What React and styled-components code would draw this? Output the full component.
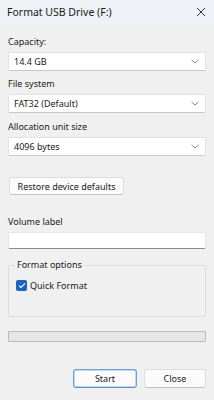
import React from 'react';
import styled, { createGlobalStyle } from 'styled-components';

const Global = createGlobalStyle`
  html, body { margin: 0; padding: 0; background: #f0f0f0; }
  body { font-family: "Noto Sans", "DejaVu Sans", sans-serif; color: #1a1a1a; }
`;

const Window = styled.div`
  width: 214px;
  height: 400px;
  background: #f0f0f0;
  display: flex;
  flex-direction: column;
`;

const TitleBar = styled.div`
  height: 24px;
  background: #eef1f6;
  display: flex;
  align-items: center;
  justify-content: space-between;
  padding: 0 8px 0 7px;
  font-size: 10.5px;
`;

const Body = styled.div`
  display: flex;
  flex-direction: column;
  padding: 0 8px;
`;

const Label = styled.div`
  font-size: 9px;
  margin-top: ${p => p.top || 12}px;
  line-height: 12px;
`;

const Select = styled.div`
  height: 19px;
  margin-top: 4px;
  background: #fff;
  border: 1px solid #e2e2e2;
  border-bottom-color: #c8c8c8;
  border-radius: 2px;
  box-sizing: border-box;
  display: flex;
  align-items: center;
  justify-content: space-between;
  padding: 0 6px 0 5px;
  font-size: 9px;
`;

const Button = styled.div`
  height: 19px;
  box-sizing: border-box;
  background: #fbfbfb;
  border: 1px solid ${p => (p.primary ? '#6f9fd6' : '#dcdcdc')};
  border-bottom-color: ${p => (p.primary ? '#5a8cc8' : '#c4c4c4')};
  border-radius: 3px;
  display: flex;
  align-items: center;
  justify-content: center;
  font-size: 9px;
  width: ${p => p.w}px;
  ${p => p.primary && 'box-shadow: 0 0 0 0.5px #8fb4e0 inset;'}
`;

const RestoreButton = styled(Button)`
  margin-top: 21px;
  margin-left: 1px;
  height: 18px;
`;

const Input = styled.div`
  height: 17px;
  margin-top: 4px;
  background: #fff;
  border: 1px solid #e6e6e6;
  border-bottom: 1px solid #8a8a8a;
  border-radius: 2px;
  box-sizing: border-box;
`;

const Group = styled.fieldset`
  margin: 10px 0 0;
  padding: 4px 7px 0;
  height: 58px;
  box-sizing: border-box;
  border: 1px solid #dcdcdc;
  border-radius: 2px;
  font-size: 9px;
  legend {
    padding: 0 2px;
    margin-left: -1px;
    line-height: 12px;
  }
`;

const CheckRow = styled.label`
  display: flex;
  align-items: center;
  gap: 3px;
  font-size: 9px;
  margin-top: 4px;
`;

const Box = styled.span`
  width: 11px;
  height: 11px;
  border-radius: 2px;
  background: #1b62c1;
  display: flex;
  align-items: center;
  justify-content: center;
`;

const Progress = styled.div`
  height: 11px;
  margin-top: 14px;
  border: 1px solid #bcbcbc;
  background: #e6e6e6;
  border-radius: 1px;
  box-sizing: border-box;
`;

const Footer = styled.div`
  display: flex;
  justify-content: flex-end;
  gap: 7px;
  margin-top: 27px;
`;

const Chevron = () => (
  <svg width="8" height="5" viewBox="0 0 8 5">
    <path d="M0.5 0.8 L4 4 L7.5 0.8" fill="none" stroke="#777" strokeWidth="0.9" />
  </svg>
);

const CloseIcon = () => (
  <svg width="10" height="10" viewBox="0 0 10 10">
    <path d="M1 1 L9 9 M9 1 L1 9" stroke="#333" strokeWidth="1" />
  </svg>
);

const Check = () => (
  <svg width="8" height="7" viewBox="0 0 8 7">
    <path d="M1 3.6 L3 5.5 L7 1.3" fill="none" stroke="#fff" strokeWidth="1.1" />
  </svg>
);

export default function App() {
  return (
    <Window>
      <Global />
      <TitleBar>
        <span>Format USB Drive (F:)</span>
        <CloseIcon />
      </TitleBar>
      <Body>
        <Label top={12}>Capacity:</Label>
        <Select>14.4 GB<Chevron /></Select>
        <Label top={7}>File system</Label>
        <Select>FAT32 (Default)<Chevron /></Select>
        <Label top={8}>Allocation unit size</Label>
        <Select>4096 bytes<Chevron /></Select>
        <RestoreButton w={115}>Restore device defaults</RestoreButton>
        <Label top={21}>Volume label</Label>
        <Input />
        <Group>
          <legend>Format options</legend>
          <CheckRow>
            <Box><Check /></Box>
            Quick Format
          </CheckRow>
        </Group>
        <Progress />
        <Footer>
          <Button primary w={64}>Start</Button>
          <Button w={62}>Close</Button>
        </Footer>
      </Body>
    </Window>
  );
}
